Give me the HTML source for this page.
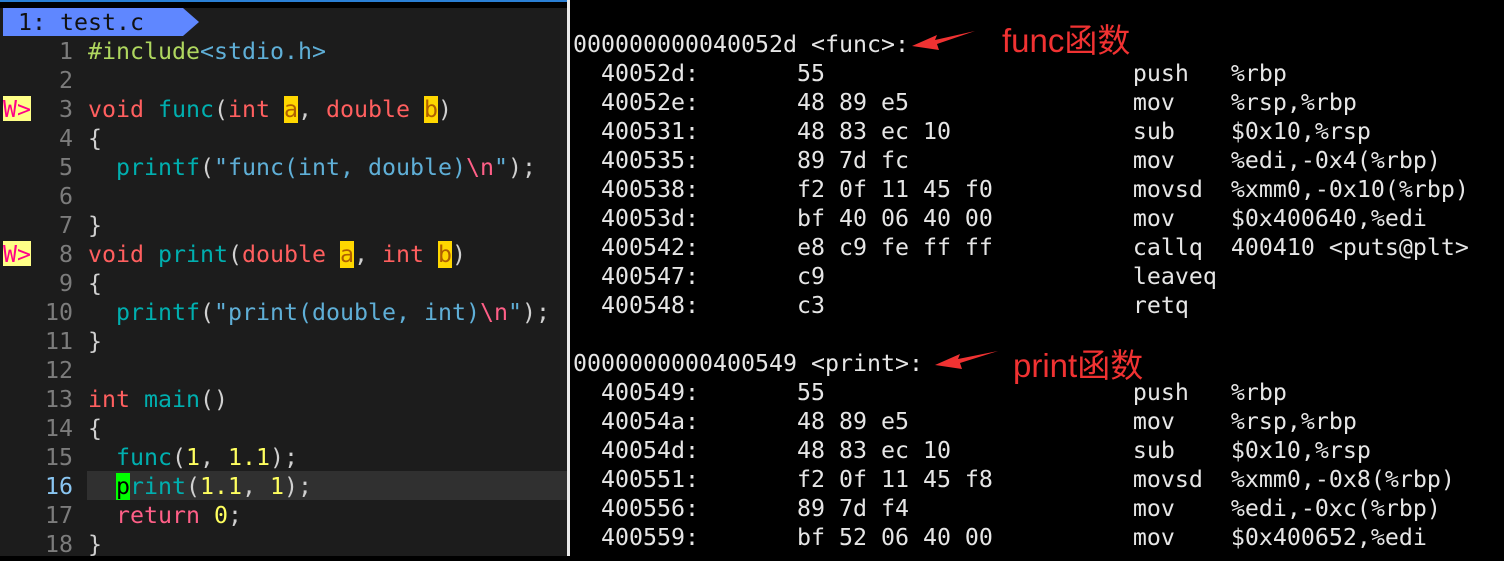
<!DOCTYPE html><html><head><meta charset="utf-8"><style>
body{margin:0;width:1504px;height:556px;overflow:hidden;background:#000;position:relative;font-family:"DejaVu Sans Mono","Liberation Mono",monospace;font-size:23.25px}
#L{position:absolute;left:0;top:0;width:567px;height:556px;background:#1c1c1c}
#top{position:absolute;left:0;top:0;width:567px;height:8px;background:#000;border-top:2px solid #2a7fd4;box-sizing:border-box}
#tab{position:absolute;left:3px;top:8px;width:180px;height:28px;background:#5f87ff;color:#111;line-height:30px;padding-left:15px;box-sizing:border-box}
#tabtip{position:absolute;left:183px;top:8px;width:0;height:0;border-top:14px solid transparent;border-bottom:14px solid transparent;border-left:16px solid #5f87ff}
.r{position:absolute;left:0;height:29px;line-height:32px;white-space:pre;width:567px}
.n{position:absolute;right:494px;color:#7c7c7c}
.c{position:absolute;left:88px;color:#d0d0d0}
.s{position:absolute;left:3px;top:2px;height:25px;line-height:28px;background:#ffff87;color:#ff0087;width:28px}
.k{color:#ff5f5f}.f{color:#00afaf}.b{color:#5fafd7}.g{color:#afd75f}.y{color:#ffff5f}.p{color:#ff5f87}
.h{background:#ffd700;color:#af5f00}
#div{position:absolute;left:567px;top:0;width:3px;height:556px;background:#e8e8e8}
.d{position:absolute;left:573px;height:29px;line-height:30px;white-space:pre;color:#e6e6e6}
.a{position:absolute;color:#f03232;font-family:"Liberation Sans","Noto Sans CJK SC",sans-serif;font-size:33px}
</style></head><body>
<div id="L"></div><div id="top"></div>
<div id="tab">1: test.c</div><div id="tabtip"></div>
<div class="r" style="top:36px"><span class="n">1</span><span class="c"><span class="g">#include</span><span class="b">&lt;stdio.h&gt;</span></span></div>
<div class="r" style="top:65px"><span class="n">2</span></div>
<div class="r" style="top:94px"><span class="s">W&gt;</span><span class="n">3</span><span class="c"><span class="k">void</span> <span class="f">func</span>(<span class="k">int</span> <span class="h">a</span>, <span class="k">double</span> <span class="h">b</span>)</span></div>
<div class="r" style="top:123px"><span class="n">4</span><span class="c">{</span></div>
<div class="r" style="top:152px"><span class="n">5</span><span class="c">  <span class="f">printf</span>(<span class="b">"func(int, double)</span><span class="p">\n</span><span class="b">"</span>);</span></div>
<div class="r" style="top:181px"><span class="n">6</span></div>
<div class="r" style="top:210px"><span class="n">7</span><span class="c">}</span></div>
<div class="r" style="top:239px"><span class="s">W&gt;</span><span class="n">8</span><span class="c"><span class="k">void</span> <span class="f">print</span>(<span class="k">double</span> <span class="h">a</span>, <span class="k">int</span> <span class="h">b</span>)</span></div>
<div class="r" style="top:268px"><span class="n">9</span><span class="c">{</span></div>
<div class="r" style="top:297px"><span class="n">10</span><span class="c">  <span class="f">printf</span>(<span class="b">"print(double, int)</span><span class="p">\n</span><span class="b">"</span>);</span></div>
<div class="r" style="top:326px"><span class="n">11</span><span class="c">}</span></div>
<div class="r" style="top:355px"><span class="n">12</span></div>
<div class="r" style="top:384px"><span class="n">13</span><span class="c"><span class="k">int</span> <span class="f">main</span>()</span></div>
<div class="r" style="top:413px"><span class="n">14</span><span class="c">{</span></div>
<div class="r" style="top:442px"><span class="n">15</span><span class="c">  <span class="f">func</span>(<span class="y">1</span>, <span class="y">1.1</span>);</span></div>
<div class="r" style="top:471px"><div style="position:absolute;left:87px;top:0;width:480px;height:29px;background:#303030"></div><span class="n" style="color:#8ac6f2">16</span><span class="c">  <span style="background:#00ff00;color:#000">p</span><span class="f">rint</span>(<span class="y">1.1</span>, <span class="y">1</span>);</span></div>
<div class="r" style="top:500px"><span class="n">17</span><span class="c">  <span class="p">return</span> <span class="y">0</span>;</span></div>
<div class="r" style="top:529px"><span class="n">18</span><span class="c">}</span></div>
<div id="div"></div>
<div class="d" style="top:30px">000000000040052d &lt;func&gt;:</div>
<div class="d" style="top:59px">  40052d:       55                      push   %rbp</div>
<div class="d" style="top:88px">  40052e:       48 89 e5                mov    %rsp,%rbp</div>
<div class="d" style="top:117px">  400531:       48 83 ec 10             sub    $0x10,%rsp</div>
<div class="d" style="top:146px">  400535:       89 7d fc                mov    %edi,-0x4(%rbp)</div>
<div class="d" style="top:175px">  400538:       f2 0f 11 45 f0          movsd  %xmm0,-0x10(%rbp)</div>
<div class="d" style="top:204px">  40053d:       bf 40 06 40 00          mov    $0x400640,%edi</div>
<div class="d" style="top:233px">  400542:       e8 c9 fe ff ff          callq  400410 &lt;puts@plt&gt;</div>
<div class="d" style="top:262px">  400547:       c9                      leaveq</div>
<div class="d" style="top:291px">  400548:       c3                      retq</div>
<div class="d" style="top:349px">0000000000400549 &lt;print&gt;:</div>
<div class="d" style="top:378px">  400549:       55                      push   %rbp</div>
<div class="d" style="top:407px">  40054a:       48 89 e5                mov    %rsp,%rbp</div>
<div class="d" style="top:436px">  40054d:       48 83 ec 10             sub    $0x10,%rsp</div>
<div class="d" style="top:465px">  400551:       f2 0f 11 45 f8          movsd  %xmm0,-0x8(%rbp)</div>
<div class="d" style="top:494px">  400556:       89 7d f4                mov    %edi,-0xc(%rbp)</div>
<div class="d" style="top:523px">  400559:       bf 52 06 40 00          mov    $0x400652,%edi</div>
<div class="a" style="left:1002px;top:14px">func函数</div>
<div class="a" style="left:1013px;top:339px">print函数</div>
<svg style="position:absolute;left:0;top:0" width="1504" height="556">
<polygon points="975,31 935,40 937,35 912,46 939,50 937,44" fill="#f03232"/>
<polygon points="998,351 958,359 960,354 935,365 962,369 960,363" fill="#f03232"/>
</svg>
</body></html>
